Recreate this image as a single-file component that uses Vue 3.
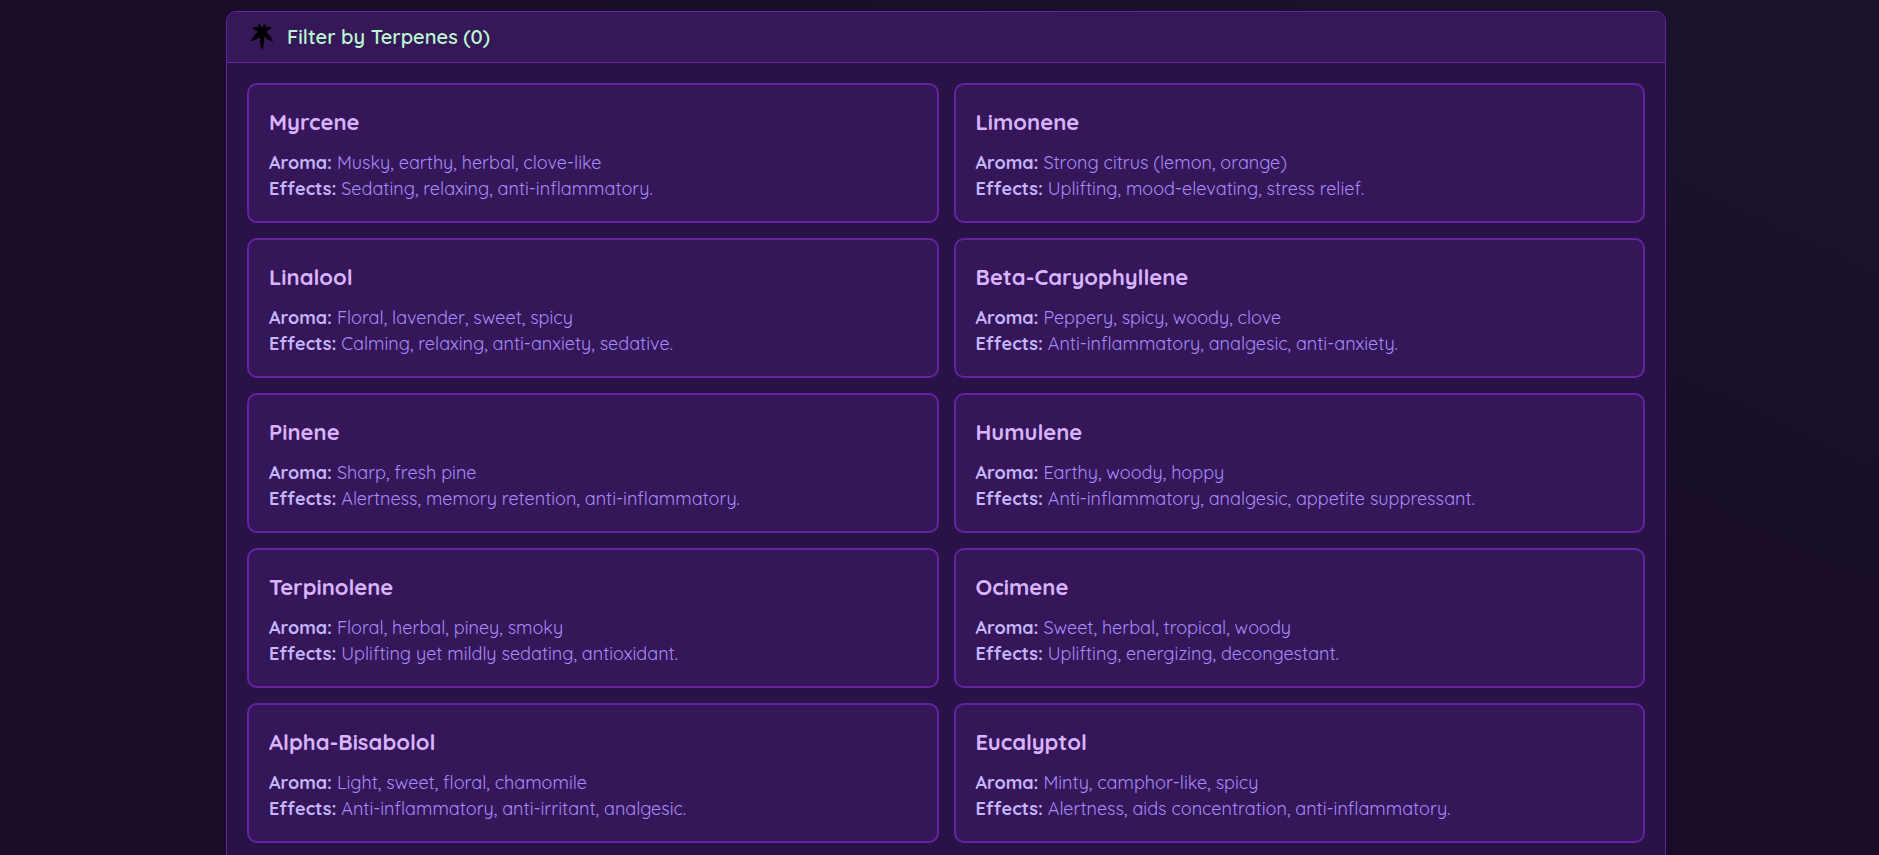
<script setup>
import { ref, computed } from 'vue'

const terpenes = [
  { name: 'Myrcene', aroma: 'Musky, earthy, herbal, clove-like', effects: 'Sedating, relaxing, anti-inflammatory.' },
  { name: 'Limonene', aroma: 'Strong citrus (lemon, orange)', effects: 'Uplifting, mood-elevating, stress relief.' },
  { name: 'Linalool', aroma: 'Floral, lavender, sweet, spicy', effects: 'Calming, relaxing, anti-anxiety, sedative.' },
  { name: 'Beta-Caryophyllene', aroma: 'Peppery, spicy, woody, clove', effects: 'Anti-inflammatory, analgesic, anti-anxiety.' },
  { name: 'Pinene', aroma: 'Sharp, fresh pine', effects: 'Alertness, memory retention, anti-inflammatory.' },
  { name: 'Humulene', aroma: 'Earthy, woody, hoppy', effects: 'Anti-inflammatory, analgesic, appetite suppressant.' },
  { name: 'Terpinolene', aroma: 'Floral, herbal, piney, smoky', effects: 'Uplifting yet mildly sedating, antioxidant.' },
  { name: 'Ocimene', aroma: 'Sweet, herbal, tropical, woody', effects: 'Uplifting, energizing, decongestant.' },
  { name: 'Alpha-Bisabolol', aroma: 'Light, sweet, floral, chamomile', effects: 'Anti-inflammatory, anti-irritant, analgesic.' },
  { name: 'Eucalyptol', aroma: 'Minty, camphor-like, spicy', effects: 'Alertness, aids concentration, anti-inflammatory.' },
]

const open = ref(true)
const selected = ref([])
const count = computed(() => selected.value.length)

function toggle(name) {
  selected.value = selected.value.includes(name)
    ? selected.value.filter((n) => n !== name)
    : [...selected.value, name]
}
</script>

<template>
  <main class="page">
    <section class="panel">
      <button class="panel-header" type="button" :aria-expanded="open" @click="open = !open">
        <svg class="leaf" viewBox="0 0 24 28" aria-hidden="true">
          <path d="M12 7 C9 13 9.500 21 12 27 C14.500 21 15 13 12 7Z" />
          <path d="M12.500 7 C7 8 3.500 12 1 18.500 C6.500 17 11.500 14 13 9Z" />
          <path d="M11.500 7 C17 8 20.500 12 23 18.500 C17.500 17 12.500 14 11 9Z" />
          <path d="M12 7 C9 3.500 5.500 3 2.500 4.500 C4.500 7.500 8.500 9.500 12 9Z" />
          <path d="M12 7 C15 3.500 18.500 3 21.500 4.500 C19.500 7.500 15.500 9.500 12 9Z" />
          <path d="M12 9 C9 7 7.800 3.500 8.300 0.800 C10.500 2 12 4 12.500 7Z" />
          <path d="M12 9 C15 7 16.200 3.500 15.700 0.800 C13.500 2 12 4 11.500 7Z" />
        </svg>
        <span>Filter by Terpenes ({{ count }})</span>
      </button>
      <div v-if="open" class="grid">
        <button
          v-for="t in terpenes"
          :key="t.name"
          class="card"
          :class="{ active: selected.includes(t.name) }"
          type="button"
          :aria-pressed="selected.includes(t.name)"
          @click="toggle(t.name)"
        >
          <span class="name">{{ t.name }}</span>
          <span class="line"><strong>Aroma:</strong> {{ t.aroma }}</span>
          <span class="line"><strong>Effects:</strong> {{ t.effects }}</span>
        </button>
      </div>
    </section>
  </main>
</template>

<style>
body {
  margin: 0;
  background: #180c29;
}
</style>

<style scoped>
.page {
  box-sizing: border-box;
  min-height: 100vh;
  padding: 11px 0 0 13px;
  background: linear-gradient(to top right, #180c29 0%, #180c29 60%, #1b122d 90%);
  font-family: Quicksand, Lato, sans-serif;
}
.panel {
  box-sizing: border-box;
  max-width: 1440px;
  margin: 0 auto;
  overflow: hidden;
  border: 1px solid #6423a3;
  border-radius: 10px;
  background: #291346;
}
.panel-header {
  display: flex;
  align-items: center;
  gap: 13px;
  width: 100%;
  padding: 10px 23px;
  border: 0;
  border-bottom: 1px solid #6423a3;
  background: #361859;
  color: #bbf7d0;
  font: 600 20px/30px Quicksand, Lato, sans-serif;
  text-align: left;
  cursor: pointer;
}
.leaf {
  width: 24px;
  height: 28px;
  fill: #000;
}
.grid {
  display: grid;
  grid-template-columns: repeat(2, minmax(0, 1fr));
  gap: 15px;
  padding: 20px;
}
.card {
  display: block;
  padding: 20px 20px 19px;
  border: 2px solid #6423a3;
  border-radius: 10px;
  background: #351658;
  color: #a78bfa;
  font: 400 18px/26px Quicksand, Lato, sans-serif;
  text-align: left;
  cursor: pointer;
}
.card.active {
  border-color: #bbf7d0;
}
.name {
  display: block;
  margin-bottom: 11px;
  color: #d8b4fe;
  font-size: 22px;
  font-weight: 700;
  line-height: 34px;
}
.line {
  display: block;
}
.line strong {
  color: #c4b5fd;
  font-weight: 700;
}
</style>
